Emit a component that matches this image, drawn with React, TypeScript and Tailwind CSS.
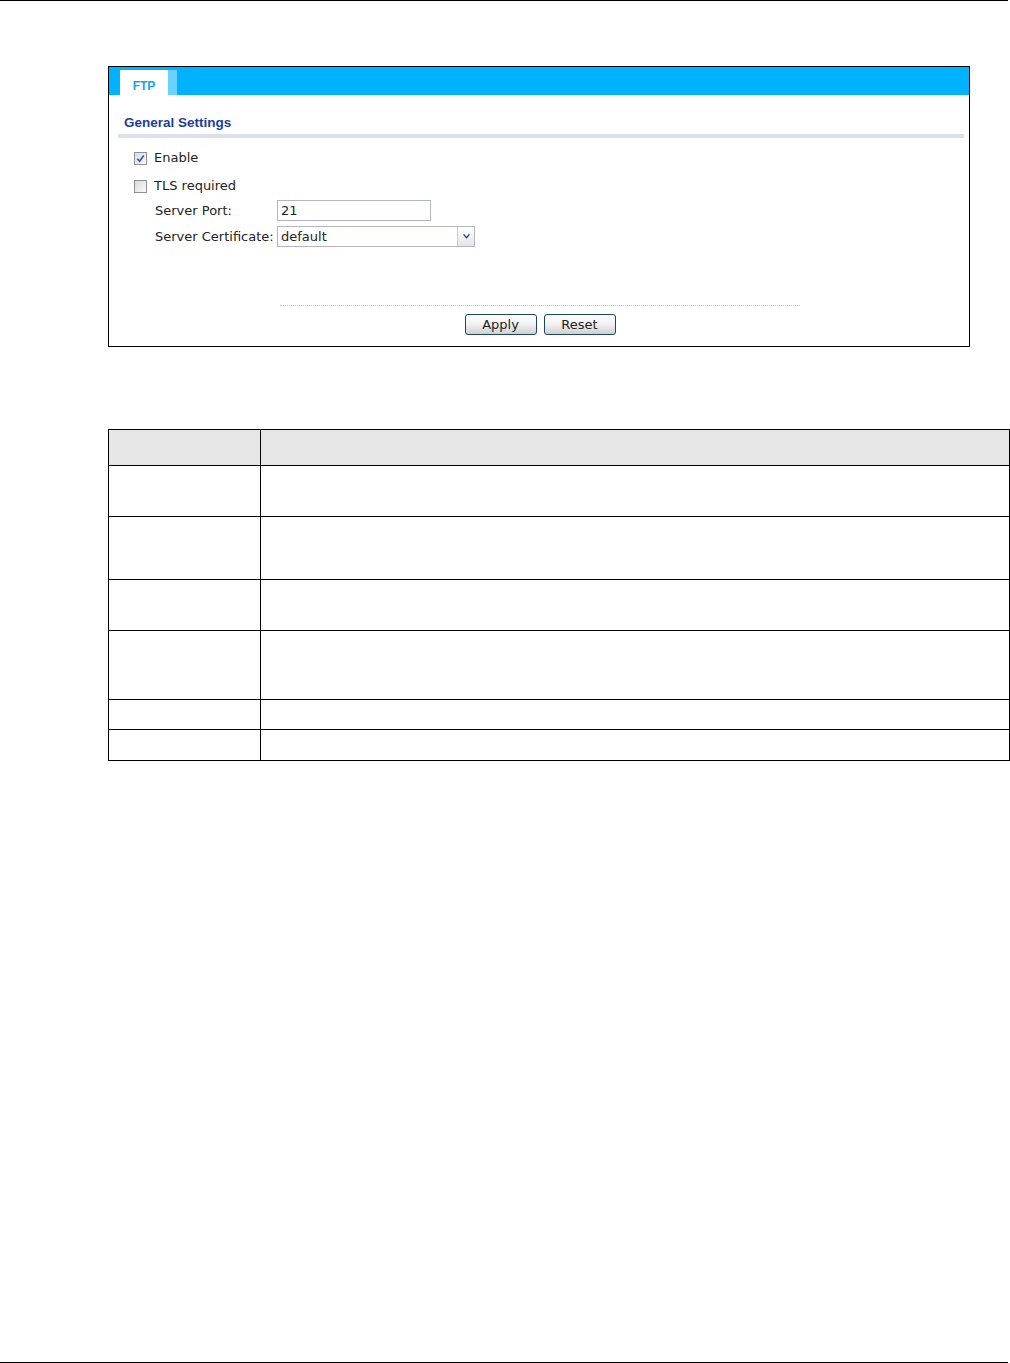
const font = { fontFamily: '"DejaVu Sans", "Liberation Sans", sans-serif' };
const bold = { fontFamily: '"Liberation Sans", Arial, sans-serif' };

function Checkbox({ checked }: { checked: boolean }) {
  return (
    <span className="flex h-[13px] w-[13px] items-center justify-center border border-[#8f8f9d] bg-gradient-to-br from-[#dcdcdc] to-[#f8f8f8]">
      {checked && (
        <svg viewBox="0 0 10 10" className="h-[9px] w-[9px]">
          <path d="M1.5 5.2 L4 8 L8.6 1.6" fill="none" stroke="#3455b8" strokeWidth="1.8" />
        </svg>
      )}
    </span>
  );
}

function Button({ label }: { label: string }) {
  return (
    <button className="h-[21px] w-[72px] rounded-[3px] border border-[#1c456e] bg-gradient-to-b from-white via-[#f1f1f1] to-[#cfcfcf] text-[13px] leading-none text-[#222]">
      {label}
    </button>
  );
}

const rows = [51, 63, 51, 69, 30, 31];

export default function App() {
  return (
    <div className="relative h-[1363px] w-[1010px] bg-white text-[13px] text-[#222]" style={font}>
      <div className="h-px w-[1008px] bg-black" />

      <div className="ml-[108px] mt-[65px] h-[281px] w-[862px] border border-black">
        <div className="flex h-[28px] items-end bg-[#00b2ff] pl-[11px]">
          <div className="h-[25px] w-[48px] bg-white pt-[8px] text-center text-[12px] font-bold leading-[16px] text-[#1aa0f2]" style={bold}>
            FTP
          </div>
          <div className="h-[25px] w-[9px] bg-[#6ad2ff]" />
        </div>

        <div className="ml-[15px] mt-[20px] text-[13.5px] font-bold leading-[16px] text-[#1b3e9e]" style={bold}>General Settings</div>
        <div className="ml-[9px] mr-[5px] mt-[3px] h-[4px] bg-[#dfe1ea]" />

        <div className="ml-[25px] mt-[13px] flex h-[14px] items-center gap-[7px]">
          <Checkbox checked />
          <span>Enable</span>
        </div>
        <div className="ml-[25px] mt-[14px] flex h-[14px] items-center gap-[7px]">
          <Checkbox checked={false} />
          <span>TLS required</span>
        </div>

        <div className="ml-[46px] mt-[7px] flex h-[21px] items-center">
          <span className="w-[122px]">Server Port:</span>
          <div className="flex h-[21px] w-[154px] items-center border border-[#b3b3cc] bg-white px-[3px]">21</div>
        </div>
        <div className="ml-[46px] mt-[5px] flex h-[21px] items-center">
          <span className="w-[122px]">Server Certificate:</span>
          <div className="flex h-[21px] w-[198px] items-center border border-[#b3b3cc] bg-white">
            <span className="flex-1 px-[3px]">default</span>
            <span className="flex h-full w-[17px] items-center justify-center border-l border-[#c8c8d8] bg-gradient-to-b from-white to-[#e4e4e4]">
              <svg viewBox="0 0 8 6" className="h-[5px] w-[7px]">
                <path d="M0.5 0.5 L4 4.5 L7.5 0.5" fill="none" stroke="#2a3f7a" strokeWidth="1.6" />
              </svg>
            </span>
          </div>
        </div>

        <div className="ml-[171px] mt-[58px] w-[520px] border-t border-dotted border-[#c4c4c4]" />
        <div className="mt-[8px] flex justify-center gap-[7px] pl-[2px]">
          <Button label="Apply" />
          <Button label="Reset" />
        </div>
      </div>

      <table className="ml-[108px] mt-[82px] w-[902px] border-collapse">
        <tbody>
          <tr className="h-[36px] bg-[#e6e6e6]">
            <td className="w-[152px] border border-black" />
            <td className="border border-black" />
          </tr>
          {rows.map((h, i) => (
            <tr key={i} style={{ height: h }}>
              <td className="w-[152px] border border-black" />
              <td className="border border-black" />
            </tr>
          ))}
        </tbody>
      </table>

      <div className="absolute bottom-0 left-0 h-px w-[1008px] bg-black" />
    </div>
  );
}
